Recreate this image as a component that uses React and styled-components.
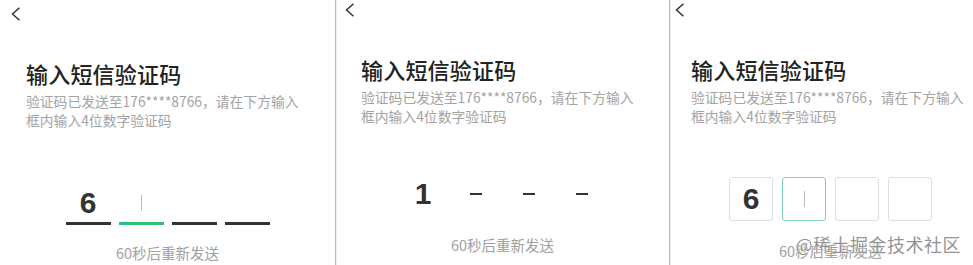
import React from 'react';
import styled, { createGlobalStyle } from 'styled-components';

const GlobalStyle = createGlobalStyle`
    html, body {
        margin: 0;
        padding: 0;
        background: #fff;
        overflow: hidden;
    }
    body {
        font-family: "Noto Sans CJK SC", "Noto Sans", sans-serif;
    }
`;

const Page = styled.div`
    position: relative;
    display: flex;
    width: 973px;
    height: 265px;
    overflow: hidden;
    background: #fff;
`;

const Panel = styled.div`
    flex: 0 0 ${props => props.$width}px;
    box-sizing: border-box;
    padding-top: ${props => props.$top}px;
    border-left: ${props => props.$divider ? "1px solid #b9b9b9" : "none"};
    box-shadow: ${props => props.$divider ? "inset 1px 0 0 #ececec" : "none"};
    display: flex;
    flex-direction: column;
`;

const Back = styled.button`
    display: block;
    border: none;
    background: none;
    padding: 0;
    margin-left: ${props => props.$x}px;
    width: 10px;
    height: 14px;
    cursor: pointer;
    svg {
        display: block;
    }
`;

const Body = styled.div`
    padding-left: ${props => props.$x}px;
`;

const Title = styled.h1`
    margin: 37px 0 0;
    font-size: 22px;
    line-height: 30px;
    font-weight: 500;
    color: #222;
    letter-spacing: 0.2px;
`;

const Hint = styled.p`
    margin: 4px 0 0;
    width: 274px;
    font-size: 13.8px;
    line-height: 19px;
    color: #a3a3a3;
`;

const CodeRow = styled.div`
    display: flex;
    justify-content: center;
    gap: ${props => props.$gap}px;
    margin-top: ${props => props.$mt}px;
`;

const Value = styled.span`
    font-family: "Liberation Sans", Arial, sans-serif;
    font-weight: 700;
    font-size: 30px;
    line-height: 34px;
    color: #333;
`;

const Cursor = styled.span`
    display: block;
    width: 1px;
    height: 16px;
    background: #bdbdbd;
`;

const LineSlot = styled.div`
    width: 45px;
    display: flex;
    flex-direction: column;
    align-items: center;
`;

const SlotValue = styled.div`
    height: 34px;
    display: flex;
    align-items: center;
    justify-content: center;
`;

const Bar = styled.div`
    margin-top: 2px;
    width: 100%;
    height: 3px;
    background: ${props => props.$active ? "#2ebd7b" : "#333"};
`;

const DashSlot = styled.div`
    width: 45px;
    height: 34px;
    display: flex;
    align-items: center;
    justify-content: center;
`;

const Dash = styled.span`
    display: block;
    width: 12px;
    height: 2px;
    background: #333;
`;

const BoxSlot = styled.div`
    width: 44px;
    height: 44px;
    box-sizing: border-box;
    border: 1px solid ${props => props.$active ? "#7ed3ab" : "#dedede"};
    border-radius: 3px;
    display: flex;
    align-items: center;
    justify-content: center;
`;

const Resend = styled.div`
    margin-top: ${props => props.$mt}px;
    text-align: center;
    font-size: 14.5px;
    line-height: 20px;
    color: #a0a0a0;
`;

const Watermark = styled.div`
    position: absolute;
    right: 12px;
    bottom: 9px;
    font-size: 18px;
    line-height: 24px;
    color: rgba(110, 110, 110, 0.75);
    text-shadow: 0 0 1px #fff, 0 0 2px #fff;
    letter-spacing: 0.5px;
`;

const BackIcon = () => (
    <svg width="10" height="14" viewBox="0 0 10 14">
        <polyline points="8.5,0.8 1.5,7 8.5,13.2" fill="none" stroke="#333" strokeWidth="1.5" strokeLinejoin="miter" />
    </svg>
);

const Header = ({arrowX, textX}) => (
    <>
        <Back $x={arrowX}><BackIcon /></Back>
        <Body $x={textX}>
            <Title>输入短信验证码</Title>
            <Hint>验证码已发送至176****8766，请在下方输入框内输入4位数字验证码</Hint>
        </Body>
    </>
);

const App = () => {
    return <Page>
        <GlobalStyle />
        <Panel $width={335} $top={7}>
            <Header arrowX={11} textX={26} />
            <CodeRow $gap={8} $mt={56}>
                <LineSlot><SlotValue><Value>6</Value></SlotValue><Bar /></LineSlot>
                <LineSlot><SlotValue><Cursor /></SlotValue><Bar $active /></LineSlot>
                <LineSlot><SlotValue /><Bar /></LineSlot>
                <LineSlot><SlotValue /><Bar /></LineSlot>
            </CodeRow>
            <Resend $mt={18}>60秒后重新发送</Resend>
        </Panel>
        <Panel $width={334} $top={3} $divider>
            <Header arrowX={9} textX={25} />
            <CodeRow $gap={8} $mt={51}>
                <DashSlot><Value>1</Value></DashSlot>
                <DashSlot><Dash /></DashSlot>
                <DashSlot><Dash /></DashSlot>
                <DashSlot><Dash /></DashSlot>
            </CodeRow>
            <Resend $mt={24}>60秒后重新发送</Resend>
        </Panel>
        <Panel $width={322} $top={3} $divider>
            <Header arrowX={5} textX={21} />
            <CodeRow $gap={9} $mt={51}>
                <BoxSlot><Value>6</Value></BoxSlot>
                <BoxSlot $active><Cursor /></BoxSlot>
                <BoxSlot />
                <BoxSlot />
            </CodeRow>
            <Resend $mt={20}>60秒后重新发送</Resend>
        </Panel>
        <Watermark>@稀土掘金技术社区</Watermark>
    </Page>
}

export default App;
